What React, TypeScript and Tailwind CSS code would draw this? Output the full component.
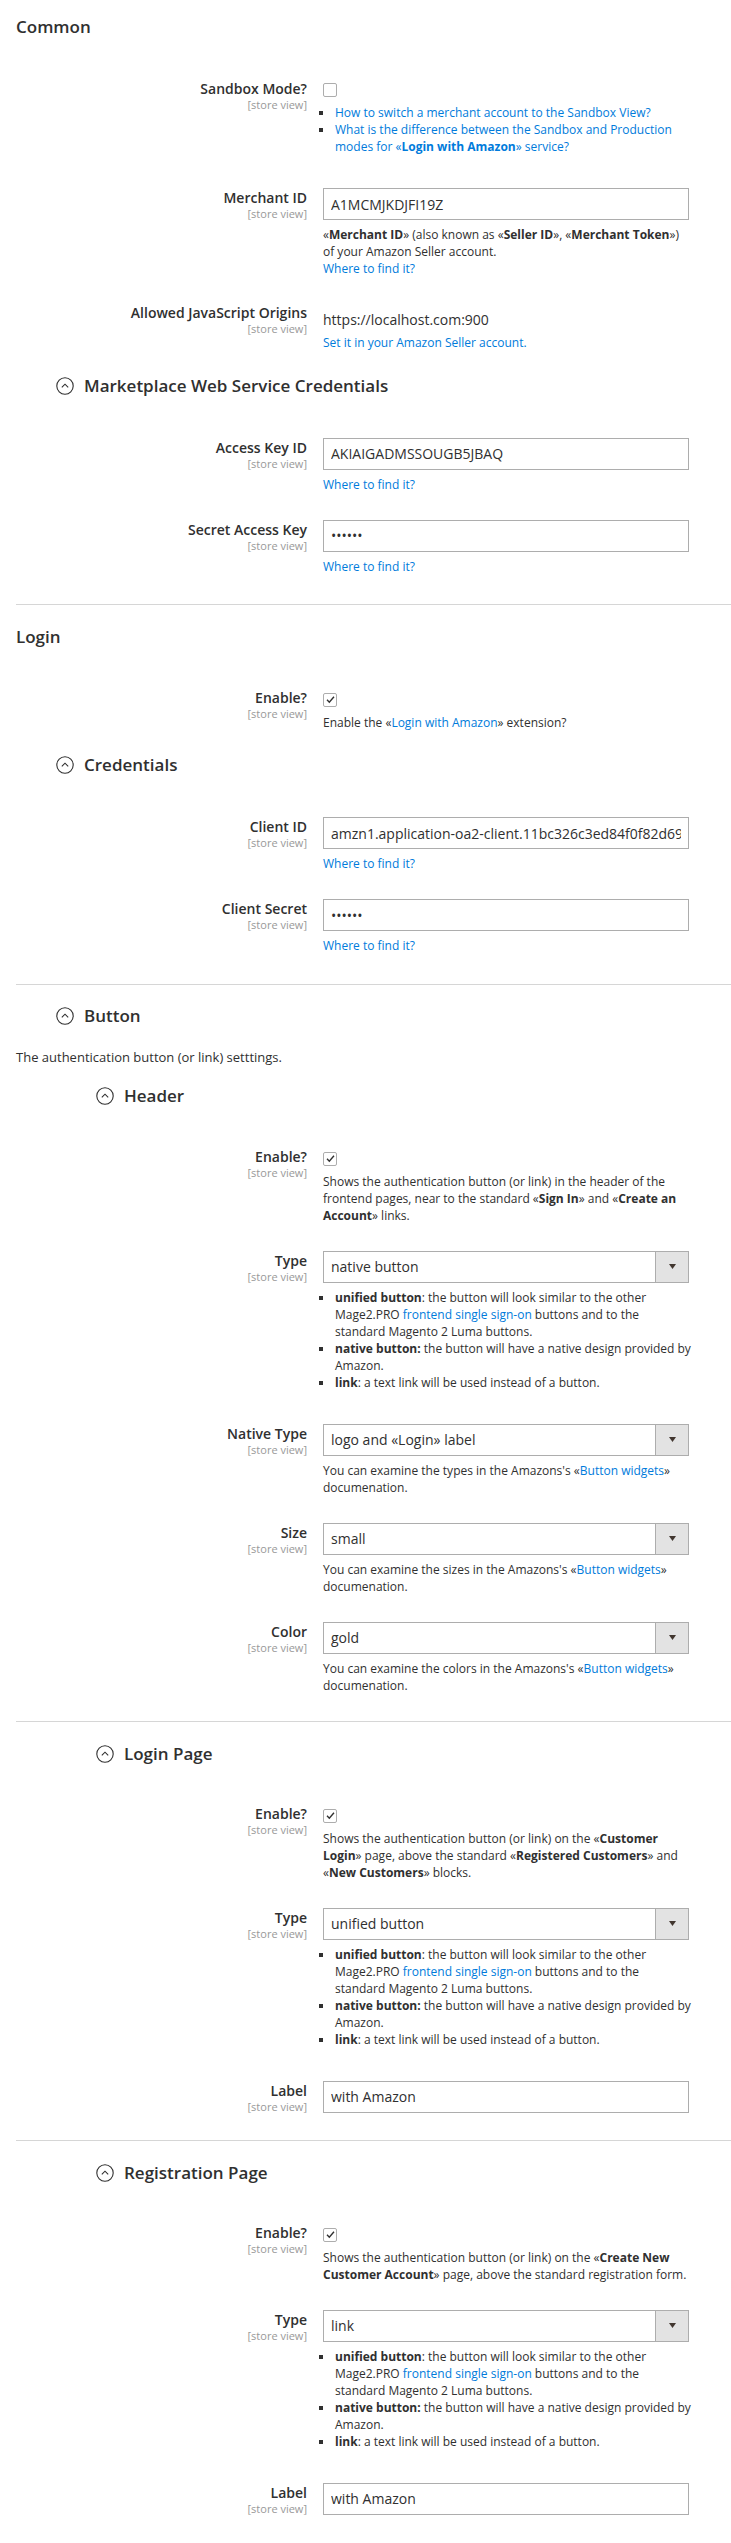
import React from "react";

type Children = { children?: React.ReactNode };

function Label({ text, pad }: { text: string; pad: string }) {
  return (
    <div className={`w-[291px] shrink-0 text-right ${pad}`}>
      <div className="text-[14px] font-semibold leading-[18px] text-[#303030]">{text}</div>
      <div className="text-[11px] leading-[13px] text-[#999999]">[store view]</div>
    </div>
  );
}

function Row({
  label,
  kind = "input",
  children,
}: Children & { label: string; kind?: "input" | "check" | "text" }) {
  const pad = kind === "input" ? "pt-[1px]" : "pt-0";
  return (
    <div className="flex py-[13.5px]">
      <Label text={label} pad={pad} />
      <div className="ml-[16px] w-[366px] shrink-0">{children}</div>
    </div>
  );
}

function TextInput({ value, password }: { value: string; password?: boolean }) {
  return (
    <input
      readOnly
      type={password ? "password" : "text"}
      value={value}
      className="block h-[32px] w-full border border-[#adadad] bg-white px-[7px] text-[14px] text-[#303030] outline-none"
    />
  );
}

function Select({ value }: { value: string }) {
  return (
    <div className="flex h-[32px] w-full border border-[#adadad] bg-white">
      <div className="flex flex-1 items-center pl-[7px] text-[14px] text-[#303030]">{value}</div>
      <div className="flex w-[33px] items-center justify-center border-l border-[#adadad] bg-[#e3e3e3]">
        <svg width="7" height="5" viewBox="0 0 7 5">
          <path d="M0 0h7L3.5 5z" fill="#41362f" />
        </svg>
      </div>
    </div>
  );
}

function Checkbox({ checked }: { checked?: boolean }) {
  return (
    <div className="mt-[3.5px] flex h-[14px] w-[14px] items-center justify-center rounded-[2px] border border-[#adadad] bg-white">
      {checked && (
        <svg viewBox="0 0 12 12" className="h-[11px] w-[11px]">
          <path d="M2.2 6.3l2.5 2.6L9.8 3" fill="none" stroke="#303030" strokeWidth="1.5" />
        </svg>
      )}
    </div>
  );
}

function Note({ children, className = "" }: Children & { className?: string }) {
  return <div className={`text-[12px] leading-[17px] text-[#303030] ${className}`}>{children}</div>;
}

function A({ children }: Children) {
  return <a className="text-[#007bdb]">{children}</a>;
}

function Where() {
  return (
    <Note className="mt-[6px]">
      <A>Where to find it?</A>
    </Note>
  );
}

function Item({ children }: Children) {
  return (
    <li className="flex">
      <span className="ml-[-4px] mt-[7px] h-[4px] w-[4px] shrink-0 bg-[#303030]" />
      <span className="ml-[12px] mr-[-8px]">{children}</span>
    </li>
  );
}

function TypeList() {
  return (
    <ul className="mb-[6px] mt-[6px] text-[12px] leading-[17px] text-[#303030]">
      <Item>
        <b className="font-bold">unified button</b>: the button will look similar to the other Mage2.PRO{" "}
        <A>frontend single sign-on</A> buttons and to the
        <br />
        standard Magento 2 Luma buttons.
      </Item>
      <Item>
        <b className="font-bold">native button:</b> the button will have a native design provided by Amazon.
      </Item>
      <Item>
        <b className="font-bold">link</b>: a text link will be used instead of a button.
      </Item>
    </ul>
  );
}

function Widgets({ what }: { what: string }) {
  return (
    <Note className="mt-[6px]">
      You can examine the {what} in the Amazons's «<A>Button widgets</A>» documenation.
    </Note>
  );
}

function Heading({ title, level }: { title: string; level: 1 | 2 }) {
  return (
    <div className={`flex h-[24px] items-center ${level === 1 ? "pl-[40px]" : "pl-[80px]"}`}>
      <svg width="18" height="18" viewBox="0 0 18 18" className="shrink-0">
        <circle cx="9" cy="9" r="8.2" fill="none" stroke="#303030" strokeWidth="1.1" />
        <path d="M5.8 10.4L9 7.2l3.2 3.2" fill="none" stroke="#303030" strokeWidth="1.1" />
      </svg>
      <span className="ml-[10px] text-[17px] font-semibold leading-[24px] text-[#303030]">{title}</span>
    </div>
  );
}

function Section({ title, first, children }: Children & { title: string; first?: boolean }) {
  return (
    <section className={first ? "pt-[15px]" : "mt-[16px] border-t border-[#d6d6d6] pt-[19.5px]"}>
      <h2 className="h-[24px] text-[17px] font-semibold leading-[24px] text-[#303030]">{title}</h2>
      <div className="mt-[27px]">{children}</div>
    </section>
  );
}

function EnableRow({ children }: Children) {
  return (
    <Row label="Enable?" kind="check">
      <Checkbox checked />
      <Note className="mt-[7px]">{children}</Note>
    </Row>
  );
}

export default function App() {
  return (
    <div className="min-h-screen bg-white pb-[13px] pl-4 font-['Open_Sans',sans-serif] text-[#303030]">
      <Section title="Common" first>
        <Row label="Sandbox Mode?" kind="check">
          <Checkbox />
          <ul className="mb-[6px] mt-[7px] text-[12px] leading-[17px]">
            <Item>
              <A>How to switch a merchant account to the Sandbox View?</A>
            </Item>
            <Item>
              <A>
                What is the difference between the Sandbox and Production modes for «
                <b className="font-bold">Login with Amazon</b>» service?
              </A>
            </Item>
          </ul>
        </Row>
        <Row label="Merchant ID">
          <TextInput value="A1MCMJKDJFI19Z" />
          <Note className="mt-[6px]">
            «<b className="font-bold">Merchant ID</b>» (also known as «<b className="font-bold">Seller ID</b>», «
            <b className="font-bold">Merchant Token</b>») of your Amazon Seller account.
            <br />
            <A>Where to find it?</A>
          </Note>
        </Row>
        <Row label="Allowed JavaScript Origins" kind="text">
          <div className="pt-[6px] text-[14px] leading-[20px]">https://localhost.com:900</div>
          <Note className="mt-[4px]">
            <A>Set it in your Amazon Seller account.</A>
          </Note>
        </Row>
        <div className="mb-[26.5px] mt-[9px]">
          <Heading title="Marketplace Web Service Credentials" level={1} />
        </div>
        <Row label="Access Key ID">
          <TextInput value="AKIAIGADMSSOUGB5JBAQ" />
          <Where />
        </Row>
        <Row label="Secret Access Key">
          <TextInput value="123456" password />
          <Where />
        </Row>
      </Section>

      <Section title="Login">
        <EnableRow>
          Enable the «<A>Login with Amazon</A>» extension?
        </EnableRow>
        <div className="mb-[26.5px] mt-[9px]">
          <Heading title="Credentials" level={1} />
        </div>
        <Row label="Client ID">
          <TextInput value="amzn1.application-oa2-client.11bc326c3ed84f0f82d69c" />
          <Where />
        </Row>
        <Row label="Client Secret">
          <TextInput value="123456" password />
          <Where />
        </Row>
      </Section>

      <section className="mt-[16px] border-t border-[#d6d6d6] pt-[19px]">
        <Heading title="Button" level={1} />
        <p className="mt-[20px] text-[13px] leading-[18px]">The authentication button (or link) setttings.</p>
        <div className="mb-[27px] mt-[18px]">
          <Heading title="Header" level={2} />
        </div>
        <EnableRow>
          Shows the authentication button (or link) in the header of the frontend pages, near to the standard «
          <b className="font-bold">Sign In</b>» and «<b className="font-bold">Create an Account</b>» links.
        </EnableRow>
        <Row label="Type">
          <Select value="native button" />
          <TypeList />
        </Row>
        <Row label="Native Type">
          <Select value="logo and «Login» label" />
          <Widgets what="types" />
        </Row>
        <Row label="Size">
          <Select value="small" />
          <Widgets what="sizes" />
        </Row>
        <Row label="Color">
          <Select value="gold" />
          <Widgets what="colors" />
        </Row>
      </section>

      <section className="mt-[14px] border-t border-[#d6d6d6] pt-[19.5px]">
        <div className="mb-[26px]">
          <Heading title="Login Page" level={2} />
        </div>
        <EnableRow>
          Shows the authentication button (or link) on the «<b className="font-bold">Customer Login</b>» page, above
          the standard «<b className="font-bold">Registered Customers</b>» and «
          <b className="font-bold">New Customers</b>» blocks.
        </EnableRow>
        <Row label="Type">
          <Select value="unified button" />
          <TypeList />
        </Row>
        <Row label="Label">
          <TextInput value="with Amazon" />
        </Row>
      </section>

      <section className="mt-[14px] border-t border-[#d6d6d6] pt-[19.5px]">
        <div className="mb-[26px]">
          <Heading title="Registration Page" level={2} />
        </div>
        <EnableRow>
          Shows the authentication button (or link) on the «<b className="font-bold">Create New Customer Account</b>»
          page, above the standard registration form.
        </EnableRow>
        <Row label="Type">
          <Select value="link" />
          <TypeList />
        </Row>
        <Row label="Label">
          <TextInput value="with Amazon" />
        </Row>
      </section>
    </div>
  );
}
